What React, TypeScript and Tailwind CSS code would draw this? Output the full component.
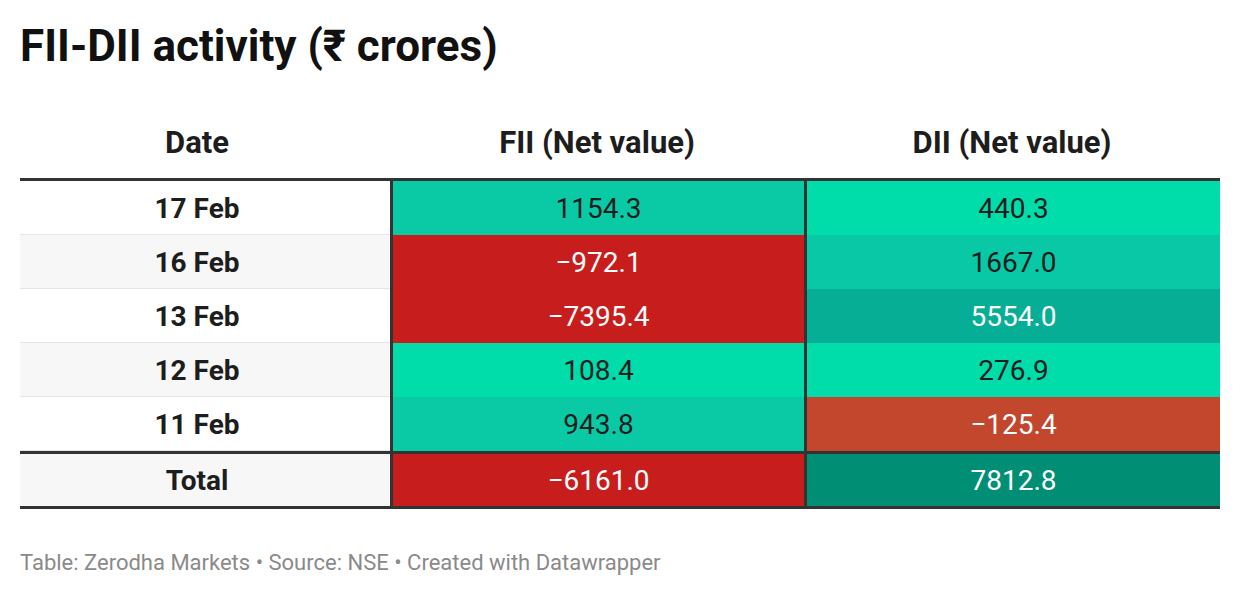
const rows = [
  { date: "17 Feb", fii: "1154.3", fiiBg: "bg-[#0acaa6]", fiiText: "text-[#1d1d1d]", dii: "440.3", diiBg: "bg-[#00dcaa]", diiText: "text-[#1d1d1d]", stripe: "bg-white" },
  { date: "16 Feb", fii: "\u2212972.1", fiiBg: "bg-[#c81d1d]", fiiText: "text-white", dii: "1667.0", diiBg: "bg-[#09c8a5]", diiText: "text-[#1d1d1d]", stripe: "bg-[#f7f7f7]" },
  { date: "13 Feb", fii: "\u22127395.4", fiiBg: "bg-[#c81d1d]", fiiText: "text-white", dii: "5554.0", diiBg: "bg-[#05ae95]", diiText: "text-white", stripe: "bg-white" },
  { date: "12 Feb", fii: "108.4", fiiBg: "bg-[#00dcaa]", fiiText: "text-[#1d1d1d]", dii: "276.9", diiBg: "bg-[#00dcaa]", diiText: "text-[#1d1d1d]", stripe: "bg-[#f7f7f7]" },
  { date: "11 Feb", fii: "943.8", fiiBg: "bg-[#0acaa6]", fiiText: "text-[#1d1d1d]", dii: "\u2212125.4", diiBg: "bg-[#c2472d]", diiText: "text-white", stripe: "bg-white" },
];

export default function App() {
  return (
    <div className="w-[1240px] h-[596px] bg-white px-[20px] pt-[20px] font-['Roboto',sans-serif]">
      <h1 className="text-[44px] leading-[52px] font-bold text-[#111]">FII-DII activity (₹ crores)</h1>

      <div className="mt-[36px]">
        <div className="grid grid-cols-[370px_414px_1fr] h-[70px] items-center text-[31px] font-bold text-[#1d1d1d]">
          <div className="text-center pr-[16px]">Date</div>
          <div className="text-center">FII (Net value)</div>
          <div className="text-center">DII (Net value)</div>
        </div>

        <div className="border-t-[3px] border-b-[3px] border-[#333]">
          {rows.map((r) => (
            <div key={r.date} className="grid grid-cols-[370px_414px_1fr] h-[54px] text-[28px]">
              <div className={`${r.stripe} border-b border-[#e5e5e5] pr-[16px] pt-[2px] flex items-center justify-center font-bold text-[#1d1d1d]`}>{r.date}</div>
              <div className={`${r.fiiBg} ${r.fiiText} border-l-[3px] border-[#333] pt-[2px] flex items-center justify-center`}>{r.fii}</div>
              <div className={`${r.diiBg} ${r.diiText} border-l-[3px] border-[#333] pt-[2px] flex items-center justify-center`}>{r.dii}</div>
            </div>
          ))}
          <div className="grid grid-cols-[370px_414px_1fr] h-[55px] border-t-[3px] border-[#333] text-[28px]">
            <div className="bg-[#f7f7f7] pr-[16px] pt-[2px] flex items-center justify-center font-bold text-[#1d1d1d]">Total</div>
            <div className="bg-[#c81d1d] text-white border-l-[3px] border-[#333] pt-[2px] flex items-center justify-center">{"\u22126161.0"}</div>
            <div className="bg-[#008f74] text-white border-l-[3px] border-[#333] pt-[2px] flex items-center justify-center">7812.8</div>
          </div>
        </div>
      </div>

      <p className="mt-[39px] text-[22px] leading-[30px] text-[#8a8a8a]">Table: Zerodha Markets • Source: NSE • Created with Datawrapper</p>
    </div>
  );
}
